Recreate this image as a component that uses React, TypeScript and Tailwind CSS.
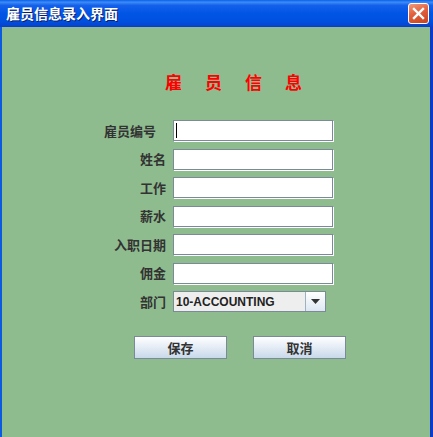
import React from "react";

const fields = ["雇员编号", "姓名", "工作", "薪水", "入职日期", "佣金"];

const cjk = { fontFamily: '"Noto Sans CJK SC", "Liberation Sans", sans-serif' };

const TitleBar = () => (
    <div className="h-[27px] flex items-center justify-between pl-[6px] pr-[4px] bg-[linear-gradient(180deg,#0a5fe8_0%,#3d8cf7_8%,#1460ea_20%,#0055e5_50%,#0050e0_80%,#0a3fc8_100%)]">
        <span
            className="text-white font-bold text-[14px] [text-shadow:1px_1px_0_#0a1f6b]"
            style={cjk}
        >
            雇员信息录入界面
        </span>
        <div className="w-[21px] h-[21px] mb-[1px] rounded-[3px] border border-white flex items-center justify-center bg-[linear-gradient(160deg,#f09a7a_0%,#e2603d_45%,#c8431e_100%)]">
            <svg width="13" height="13" viewBox="0 0 13 13">
                <path
                    d="M2 2 L11 11 M11 2 L2 11"
                    stroke="white"
                    strokeWidth="2.4"
                    strokeLinecap="square"
                />
            </svg>
        </div>
    </div>
);

const TextField = ({ caret }: { caret?: boolean }) => (
    <div className="w-[160px] h-[21px] bg-white border border-[#7a8a99] shadow-[1px_1px_0_#ffffff] flex items-center pl-[2px]">
        {caret && <div className="w-[1px] h-[15px] bg-black" />}
    </div>
);

const Combo = () => (
    <div className="flex h-[21px] w-[153px] border border-[#7a8a99]">
        <div className="flex-1 bg-[#eeeeee] flex items-center pl-[2px] border-r border-[#a0b0c0]">
            <span
                className="text-[12px] font-bold text-[#222]"
                style={{ fontFamily: '"Liberation Sans", sans-serif' }}
            >
                10-ACCOUNTING
            </span>
        </div>
        <div className="w-[19px] bg-[linear-gradient(180deg,#ffffff_0%,#dde7f2_100%)] flex items-center justify-center">
            <svg width="9" height="5" viewBox="0 0 9 5">
                <path d="M0 0 L9 0 L4.5 5 Z" fill="#333" />
            </svg>
        </div>
    </div>
);

const Button = ({ label }: { label: string }) => (
    <div
        className="w-[93px] h-[23px] border border-[#7a8a99] bg-[linear-gradient(180deg,#ffffff_0%,#eef3f9_30%,#c9d9ea_100%)] flex items-center justify-center text-[13px] font-bold text-[#333]"
        style={cjk}
    >
        {label}
    </div>
);

export default function App() {
    return (
        <div className="w-[433px] h-[437px] flex flex-col overflow-hidden">
            <TitleBar />
            <div className="flex-1 bg-[#8fbc8f] border-l-2 border-l-[#0b5ae0] border-r-[3px] border-r-[#0a3cc8]">
                {/* Heading */}
                <div
                    className="mt-[45px] pl-[163px] flex gap-[23px] text-[17px] leading-[20px] text-[#ff0000] font-bold"
                    style={cjk}
                >
                    <span>雇</span>
                    <span>员</span>
                    <span>信</span>
                    <span>息</span>
                </div>

                {/* Form */}
                <div className="mt-[28px] pl-[96px] flex flex-col gap-[7.5px]">
                    {fields.map((label, i) => (
                        <div key={label} className="flex items-center gap-[7px]">
                            <div
                                className={`w-[68px] text-right text-[13px] font-bold text-[#333] whitespace-nowrap ${i === 0 ? "pr-[10px]" : ""}`}
                                style={cjk}
                            >
                                {label}
                            </div>
                            <TextField caret={i === 0} />
                        </div>
                    ))}
                    <div className="flex items-center gap-[7px]">
                        <div
                            className="w-[68px] text-right text-[13px] font-bold text-[#333]"
                            style={cjk}
                        >
                            部门
                        </div>
                        <Combo />
                    </div>
                </div>

                {/* Buttons */}
                <div className="mt-[24px] pl-[132px] flex gap-[26px]">
                    <Button label="保存" />
                    <Button label="取消" />
                </div>
            </div>
        </div>
    );
}
